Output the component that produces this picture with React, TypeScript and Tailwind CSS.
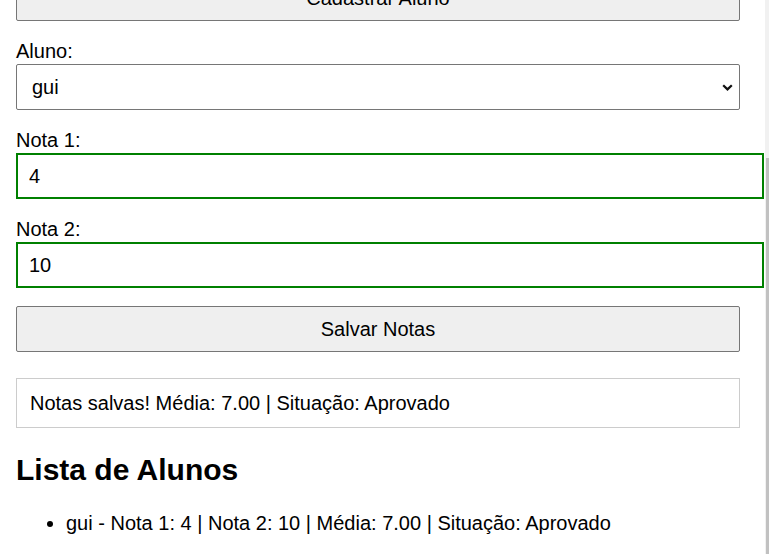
import { useState } from "react";

type Aluno = { nome: string; nota1: number; nota2: number };

const media = (a: Aluno) => (a.nota1 + a.nota2) / 2;
const situacao = (a: Aluno) => (media(a) >= 6 ? "Aprovado" : "Reprovado");

const Label = ({ children }: { children: React.ReactNode }) => (
  <label className="mt-[19px] block h-[23px] text-[20px] leading-[23px] text-black">{children}</label>
);

const NotaInput = ({ value, onChange }: { value: string; onChange: (v: string) => void }) => (
  <input
    type="number"
    value={value}
    onChange={(e) => onChange(e.target.value)}
    className="mt-px block h-[46px] w-[748px] border-2 border-[#008000] bg-white px-[11px] text-[20px] text-black outline-none [appearance:textfield] [&::-webkit-inner-spin-button]:appearance-none"
  />
);

export default function App() {
  const [alunos] = useState<Aluno[]>([{ nome: "gui", nota1: 4, nota2: 10 }]);
  const [selecionado, setSelecionado] = useState("gui");
  const [nota1, setNota1] = useState("4");
  const [nota2, setNota2] = useState("10");

  const atual = alunos[0];

  return (
    <div className="flex h-[554px] overflow-hidden bg-white font-['Liberation_Sans',Arial,sans-serif] text-black">
      <div className="w-[765px] shrink-0">
        <div className="-mt-[25px] ml-4 w-[724px]">
          <button className="block h-[46px] w-full rounded-[2px] border border-[#767676] bg-[#efefef] text-[20px] text-black">
            Cadastrar Aluno
          </button>

          <Label>Aluno:</Label>
          <div className="relative mt-px">
            <select
              value={selecionado}
              onChange={(e) => setSelecionado(e.target.value)}
              className="block h-[46px] w-full appearance-none rounded-[2px] border border-[#767676] bg-white pl-[15px] text-[20px] text-black outline-none"
            >
              {alunos.map((a) => (
                <option key={a.nome} value={a.nome}>
                  {a.nome}
                </option>
              ))}
            </select>
            <svg
              className="pointer-events-none absolute right-[7px] top-[20px]"
              width="11"
              height="7"
              viewBox="0 0 11 7"
              fill="none"
            >
              <polyline points="1.2,1.2 5.5,5.4 9.8,1.2" stroke="#111" strokeWidth="2.2" />
            </svg>
          </div>

          <Label>Nota 1:</Label>
          <NotaInput value={nota1} onChange={setNota1} />

          <Label>Nota 2:</Label>
          <NotaInput value={nota2} onChange={setNota2} />

          <button className="mt-[18px] block h-[46px] w-full rounded-[2px] border border-[#767676] bg-[#efefef] text-[20px] text-black">
            Salvar Notas
          </button>

          <div className="mt-[26px] flex h-[50px] items-center border border-[#cccccc] bg-white px-[13px] text-[20px]">
            Notas salvas! Média: {media(atual).toFixed(2)} | Situação: {situacao(atual)}
          </div>

          <h2 className="mt-[25px] h-[34px] text-[30px] font-bold leading-[34px]">Lista de Alunos</h2>

          <ul className="mt-[25px] list-disc pl-[50px] text-[20px] leading-[23px]">
            {alunos.map((a) => (
              <li key={a.nome}>
                {a.nome} - Nota 1: {a.nota1} | Nota 2: {a.nota2} | Média: {media(a).toFixed(2)} | Situação:{" "}
                {situacao(a)}
              </li>
            ))}
          </ul>
        </div>
      </div>
      <div className="flex w-[4px] shrink-0 flex-col bg-[#f1f1f1]">
        <div className="mt-[158px] ml-px h-full w-[3px] bg-[#c1c1c1]" />
      </div>
    </div>
  );
}
